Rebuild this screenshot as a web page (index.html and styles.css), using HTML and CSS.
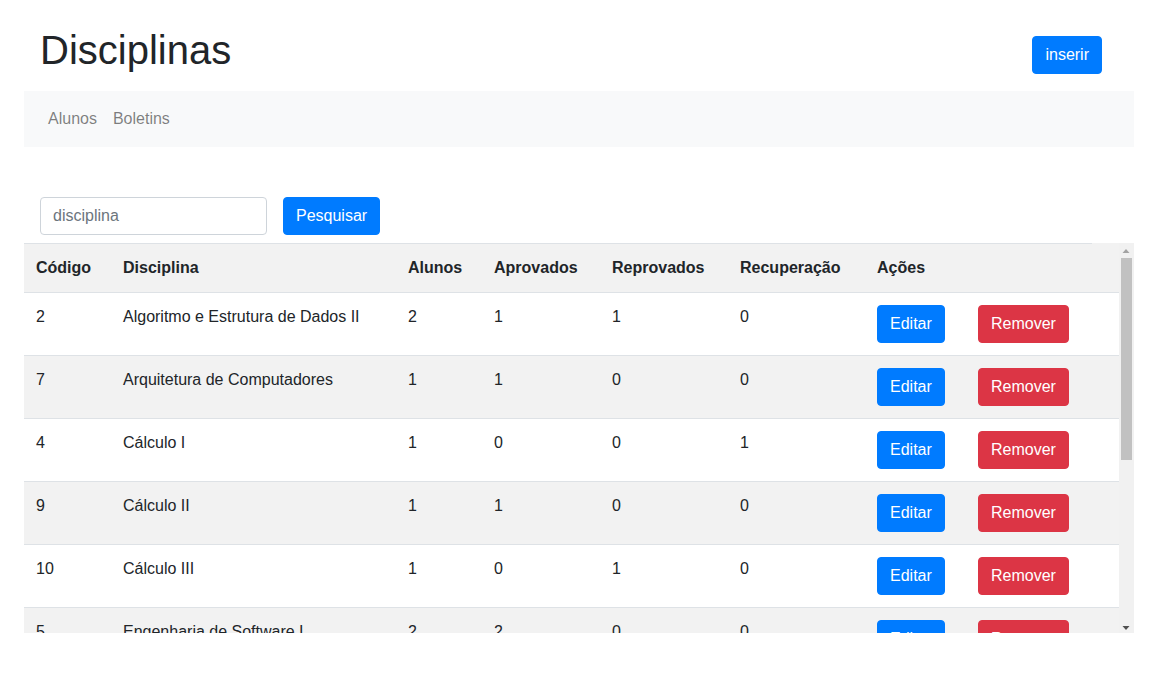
FILE: index.html
```html
<!DOCTYPE html>
<html lang="pt-BR">
<head>
<meta charset="utf-8">
<title>Disciplinas</title>
<link rel="stylesheet" href="styles.css">
</head>
<body>
<div class="page">
  <header class="top">
    <h1 class="title">Disciplinas</h1>
    <button class="btn btn-primary">inserir</button>
  </header>
  <nav class="navbar">
    <a class="nav-link" href="#">Alunos</a>
    <a class="nav-link" href="#">Boletins</a>
  </nav>
  <form class="search">
    <input class="input" type="text" placeholder="disciplina">
    <button class="btn btn-primary" type="button">Pesquisar</button>
  </form>
  <div class="table-box">
    <div class="table-wrap">
      <table class="table">
        <colgroup>
          <col class="c-cod"><col class="c-disc"><col class="c-alu"><col class="c-apr"><col class="c-rep"><col class="c-rec"><col class="c-ed"><col class="c-rm"><col class="c-sp">
        </colgroup>
        <tr class="head">
          <th>Código</th><th>Disciplina</th><th>Alunos</th><th>Aprovados</th><th>Reprovados</th><th>Recuperação</th><th colspan="2">Ações</th><th class="spacer"></th>
        </tr>
        <tr><td>2</td><td>Algoritmo e Estrutura de Dados II</td><td>2</td><td>1</td><td>1</td><td>0</td><td><button class="btn btn-primary">Editar</button></td><td><button class="btn btn-danger">Remover</button></td><td></td></tr>
        <tr><td>7</td><td>Arquitetura de Computadores</td><td>1</td><td>1</td><td>0</td><td>0</td><td><button class="btn btn-primary">Editar</button></td><td><button class="btn btn-danger">Remover</button></td><td></td></tr>
        <tr><td>4</td><td>Cálculo I</td><td>1</td><td>0</td><td>0</td><td>1</td><td><button class="btn btn-primary">Editar</button></td><td><button class="btn btn-danger">Remover</button></td><td></td></tr>
        <tr><td>9</td><td>Cálculo II</td><td>1</td><td>1</td><td>0</td><td>0</td><td><button class="btn btn-primary">Editar</button></td><td><button class="btn btn-danger">Remover</button></td><td></td></tr>
        <tr><td>10</td><td>Cálculo III</td><td>1</td><td>0</td><td>1</td><td>0</td><td><button class="btn btn-primary">Editar</button></td><td><button class="btn btn-danger">Remover</button></td><td></td></tr>
        <tr><td>5</td><td>Engenharia de Software I</td><td>2</td><td>2</td><td>0</td><td>0</td><td><button class="btn btn-primary">Editar</button></td><td><button class="btn btn-danger">Remover</button></td><td></td></tr>
        <tr><td>6</td><td>Engenharia de Software II</td><td>1</td><td>1</td><td>0</td><td>0</td><td><button class="btn btn-primary">Editar</button></td><td><button class="btn btn-danger">Remover</button></td><td></td></tr>
        <tr><td>1</td><td>Estrutura de Dados I</td><td>2</td><td>1</td><td>0</td><td>1</td><td><button class="btn btn-primary">Editar</button></td><td><button class="btn btn-danger">Remover</button></td><td></td></tr>
        <tr><td>3</td><td>Programação I</td><td>2</td><td>2</td><td>0</td><td>0</td><td><button class="btn btn-primary">Editar</button></td><td><button class="btn btn-danger">Remover</button></td><td></td></tr>
        <tr><td>8</td><td>Redes de Computadores</td><td>1</td><td>0</td><td>1</td><td>0</td><td><button class="btn btn-primary">Editar</button></td><td><button class="btn btn-danger">Remover</button></td><td></td></tr>
      </table>
    </div>
    <div class="scrollbar" aria-hidden="true">
      <div class="sb-btn">
        <svg width="15" height="15" viewBox="0 0 15 15"><path d="M3.5 10h7l-3.5-4z" fill="#a3a3a3"/></svg>
      </div>
      <div class="sb-track">
        <div class="sb-thumb"></div>
      </div>
      <div class="sb-btn">
        <svg width="15" height="15" viewBox="0 0 15 15"><path d="M3.5 8h7l-3.5 4z" fill="#505050"/></svg>
      </div>
    </div>
  </div>
</div>
</body>
</html>
```

FILE: styles.css
```css
* { box-sizing: border-box; }

html, body {
  margin: 0;
  padding: 0;
  background: #fff;
}

body {
  font-family: "Liberation Sans", Arial, sans-serif;
  font-size: 16px;
  line-height: 24px;
  color: #212529;
}

.page {
  width: 1110px;
  margin-left: 24px;
}

.top {
  display: flex;
  align-items: center;
  justify-content: space-between;
  padding: 26px 32px 7px 16px;
}

.title {
  margin: 0 0 10px 0;
  font-size: 40px;
  line-height: 48px;
  font-weight: 400;
  color: #212529;
}

.btn {
  display: inline-block;
  font-family: inherit;
  font-size: 16px;
  line-height: 24px;
  padding: 6px 12px;
  border: 1px solid transparent;
  border-radius: 4px;
  color: #fff;
  cursor: pointer;
  vertical-align: top;
}

.btn-primary {
  background: #007bff;
  border-color: #007bff;
}

.btn-danger {
  background: #dc3545;
  border-color: #dc3545;
}

.navbar {
  display: flex;
  background: #f8f9fa;
  padding: 8px 16px;
}

.nav-link {
  display: block;
  padding: 8px;
  color: rgba(0, 0, 0, 0.5);
  text-decoration: none;
}

.search {
  display: flex;
  gap: 16px;
  margin: 50px 0 8px 0;
  padding-left: 16px;
}

.input {
  width: 227px;
  height: 38px;
  padding: 6px 12px;
  font-family: inherit;
  font-size: 16px;
  line-height: 24px;
  color: #495057;
  border: 1px solid #ced4da;
  border-radius: 4px;
  background: #fff;
}

.input::placeholder {
  color: #6c757d;
}

.table-box {
  position: relative;
  height: 390px;
}

.table-wrap {
  height: 390px;
  overflow-y: scroll;
  scrollbar-width: none;
}

.table-wrap::-webkit-scrollbar {
  display: none;
}

.scrollbar {
  position: absolute;
  top: 0;
  right: 0;
  width: 15px;
  height: 390px;
  background: #f1f1f1;
  display: flex;
  flex-direction: column;
}

.sb-btn {
  height: 15px;
  flex: none;
}

.sb-btn svg {
  display: block;
}

.sb-track {
  flex: 1;
  padding: 0 2px;
}

.sb-thumb {
  height: 202px;
  background: #c1c1c1;
}

.table {
  width: 1095px;
  table-layout: fixed;
  border-collapse: separate;
  border-spacing: 0;
}

.c-cod { width: 87px; }
.c-disc { width: 285px; }
.c-alu { width: 86px; }
.c-apr { width: 118px; }
.c-rep { width: 128px; }
.c-rec { width: 137px; }
.c-ed { width: 101px; }
.c-rm { width: 126px; }
.c-sp { width: 27px; }

.table th,
.table td {
  padding: 12px;
  text-align: left;
  vertical-align: top;
  border-top: 1px solid #dee2e6;
}

.table th {
  font-weight: 700;
}

.table tr:nth-child(odd) {
  background: #f2f2f2;
}

.table tr.head {
  background: transparent;
}

.table tr.head th {
  background: #f2f2f2;
}

.table th.spacer {
  background: #fff;
  border-top: none;
}
```
